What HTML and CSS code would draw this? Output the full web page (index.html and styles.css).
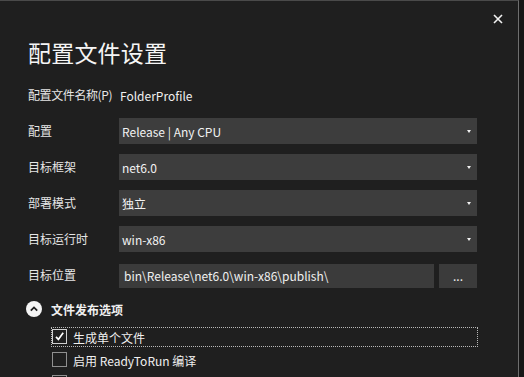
FILE: index.html
```html
<!DOCTYPE html>
<html lang="zh-CN">
<head>
  <meta charset="UTF-8">
  <title>配置文件设置</title>
  <link rel="stylesheet" href="styles.css">
</head>
<body>
  <div class="dialog">
    <div class="top-bar">
      <span class="close-btn">
        <svg width="10" height="10" viewBox="0 0 10 10"><path d="M1 1 L9 9 M9 1 L1 9" stroke="#f2f2f2" stroke-width="1.6" fill="none"/></svg>
      </span>
    </div>

    <h1 class="title">配置文件设置</h1>

    <div class="name-row">
      <span class="label">配置文件名称(P)</span>
      <span class="name-value">FolderProfile</span>
    </div>

    <!-- 设置项 -->
    <div class="form">
      <span class="label">配置</span>
      <div class="select"><span>Release | Any CPU</span><i class="arrow"></i></div>

      <span class="label">目标框架</span>
      <div class="select"><span>net6.0</span><i class="arrow"></i></div>

      <span class="label">部署模式</span>
      <div class="select"><span>独立</span><i class="arrow"></i></div>

      <span class="label">目标运行时</span>
      <div class="select"><span>win-x86</span><i class="arrow"></i></div>

      <span class="label">目标位置</span>
      <div class="path-row">
        <div class="text-input">bin\Release\net6.0\win-x86\publish\</div>
        <div class="browse-btn">...</div>
      </div>
    </div>

    <!-- 文件发布选项 -->
    <div class="expander">
      <span class="expander-icon">
        <svg width="16" height="16" viewBox="0 0 16 16"><circle cx="8" cy="8" r="8" fill="#f4f4f4"/><path d="M4.8 9.6 L8 6.4 L11.2 9.6" stroke="#1f1f1f" stroke-width="1.8" fill="none"/></svg>
      </span>
      <span class="expander-text">文件发布选项</span>
    </div>

    <div class="options">
      <div class="option focused">
        <span class="checkbox checked">
          <svg width="13" height="13" viewBox="0 0 13 13"><path d="M3 6.8 L5.4 9.4 L10.2 2.8" stroke="#fff" stroke-width="1.7" fill="none"/></svg>
        </span>
        <span>生成单个文件</span>
      </div>
      <div class="option">
        <span class="checkbox"></span>
        <span>启用 ReadyToRun 编译</span>
      </div>
      <div class="option">
        <span class="checkbox"></span>
      </div>
    </div>
  </div>
</body>
</html>
```

FILE: styles.css
```css
html, body {
  margin: 0;
  padding: 0;
  height: 100%;
  overflow: hidden;
}

body {
  background-color: #161616;
  font-family: "Noto Sans CJK SC", "Noto Sans", sans-serif;
  font-size: 12px;
  color: #e8e8e8;
}

.dialog {
  width: 519px;
  height: 377px;
  box-sizing: border-box;
  background-color: #1f1f1f;
  border-top: 1px solid #4a4a4a;
  border-right: 1px solid #6e6e6e;
  padding: 0 0 0 28px;
}

.top-bar {
  display: flex;
  justify-content: flex-end;
  height: 25px;
  padding-right: 14px;
}

.close-btn {
  display: flex;
  align-items: center;
  justify-content: center;
  width: 12px;
  height: 12px;
  margin-top: 12px;
}

.title {
  margin: 0;
  font-size: 23px;
  font-weight: normal;
  line-height: 30px;
  height: 30px;
  margin-top: 11px;
  color: #f5f5f5;
  letter-spacing: 0.2px;
}

.name-row {
  display: flex;
  align-items: center;
  height: 24px;
  margin-top: 16px;
}

.label {
  width: 91px;
  line-height: 16px;
  color: #e6e6e6;
}

.name-row .label {
  letter-spacing: -0.4px;
}

.name-value {
  color: #f0f0f0;
  padding-left: 1px;
}

.form {
  display: grid;
  grid-template-columns: 91px 358px;
  grid-auto-rows: 26px;
  row-gap: 10px;
  align-items: center;
  margin-top: 11px;
}

.select {
  display: flex;
  align-items: center;
  justify-content: space-between;
  height: 26px;
  background-color: #3d3d3d;
  padding: 0 6px 0 3px;
  color: #f2f2f2;
}

.arrow {
  width: 0;
  height: 0;
  border-left: 2.5px solid transparent;
  border-right: 2.5px solid transparent;
  border-top: 3px solid #f2f2f2;
}

.path-row {
  display: flex;
  gap: 5px;
  height: 24px;
  margin-top: 1px;
}

.text-input {
  flex: 1;
  background-color: #3b3b3b;
  padding: 0 5px;
  line-height: 24px;
  color: #f0f0f0;
}

.browse-btn {
  width: 38px;
  background-color: #3b3b3b;
  text-align: center;
  line-height: 24px;
  color: #f0f0f0;
}

.expander {
  display: flex;
  align-items: center;
  height: 18px;
  margin-top: 12px;
}

.expander-icon {
  display: flex;
  width: 16px;
  height: 16px;
  margin-left: -2px;
}

.expander-text {
  margin-left: 9px;
  font-weight: bold;
  color: #f0f0f0;
}

.options {
  display: flex;
  flex-direction: column;
  gap: 5px;
  margin-top: 10px;
  margin-left: 24px;
  width: 425px;
}

.option {
  display: flex;
  align-items: center;
  gap: 6px;
  height: 18px;
  box-sizing: border-box;
  color: #f0f0f0;
}

.option.focused {
  outline: 1px dotted #b8b8b8;
}

.checkbox {
  display: flex;
  align-items: center;
  justify-content: center;
  width: 15px;
  height: 15px;
  box-sizing: border-box;
  border: 1px solid #8f8f8f;
  background-color: #1f1f1f;
  margin-top: -2px;
}

.checkbox.checked {
  border-color: #d0d0d0;
}
```
